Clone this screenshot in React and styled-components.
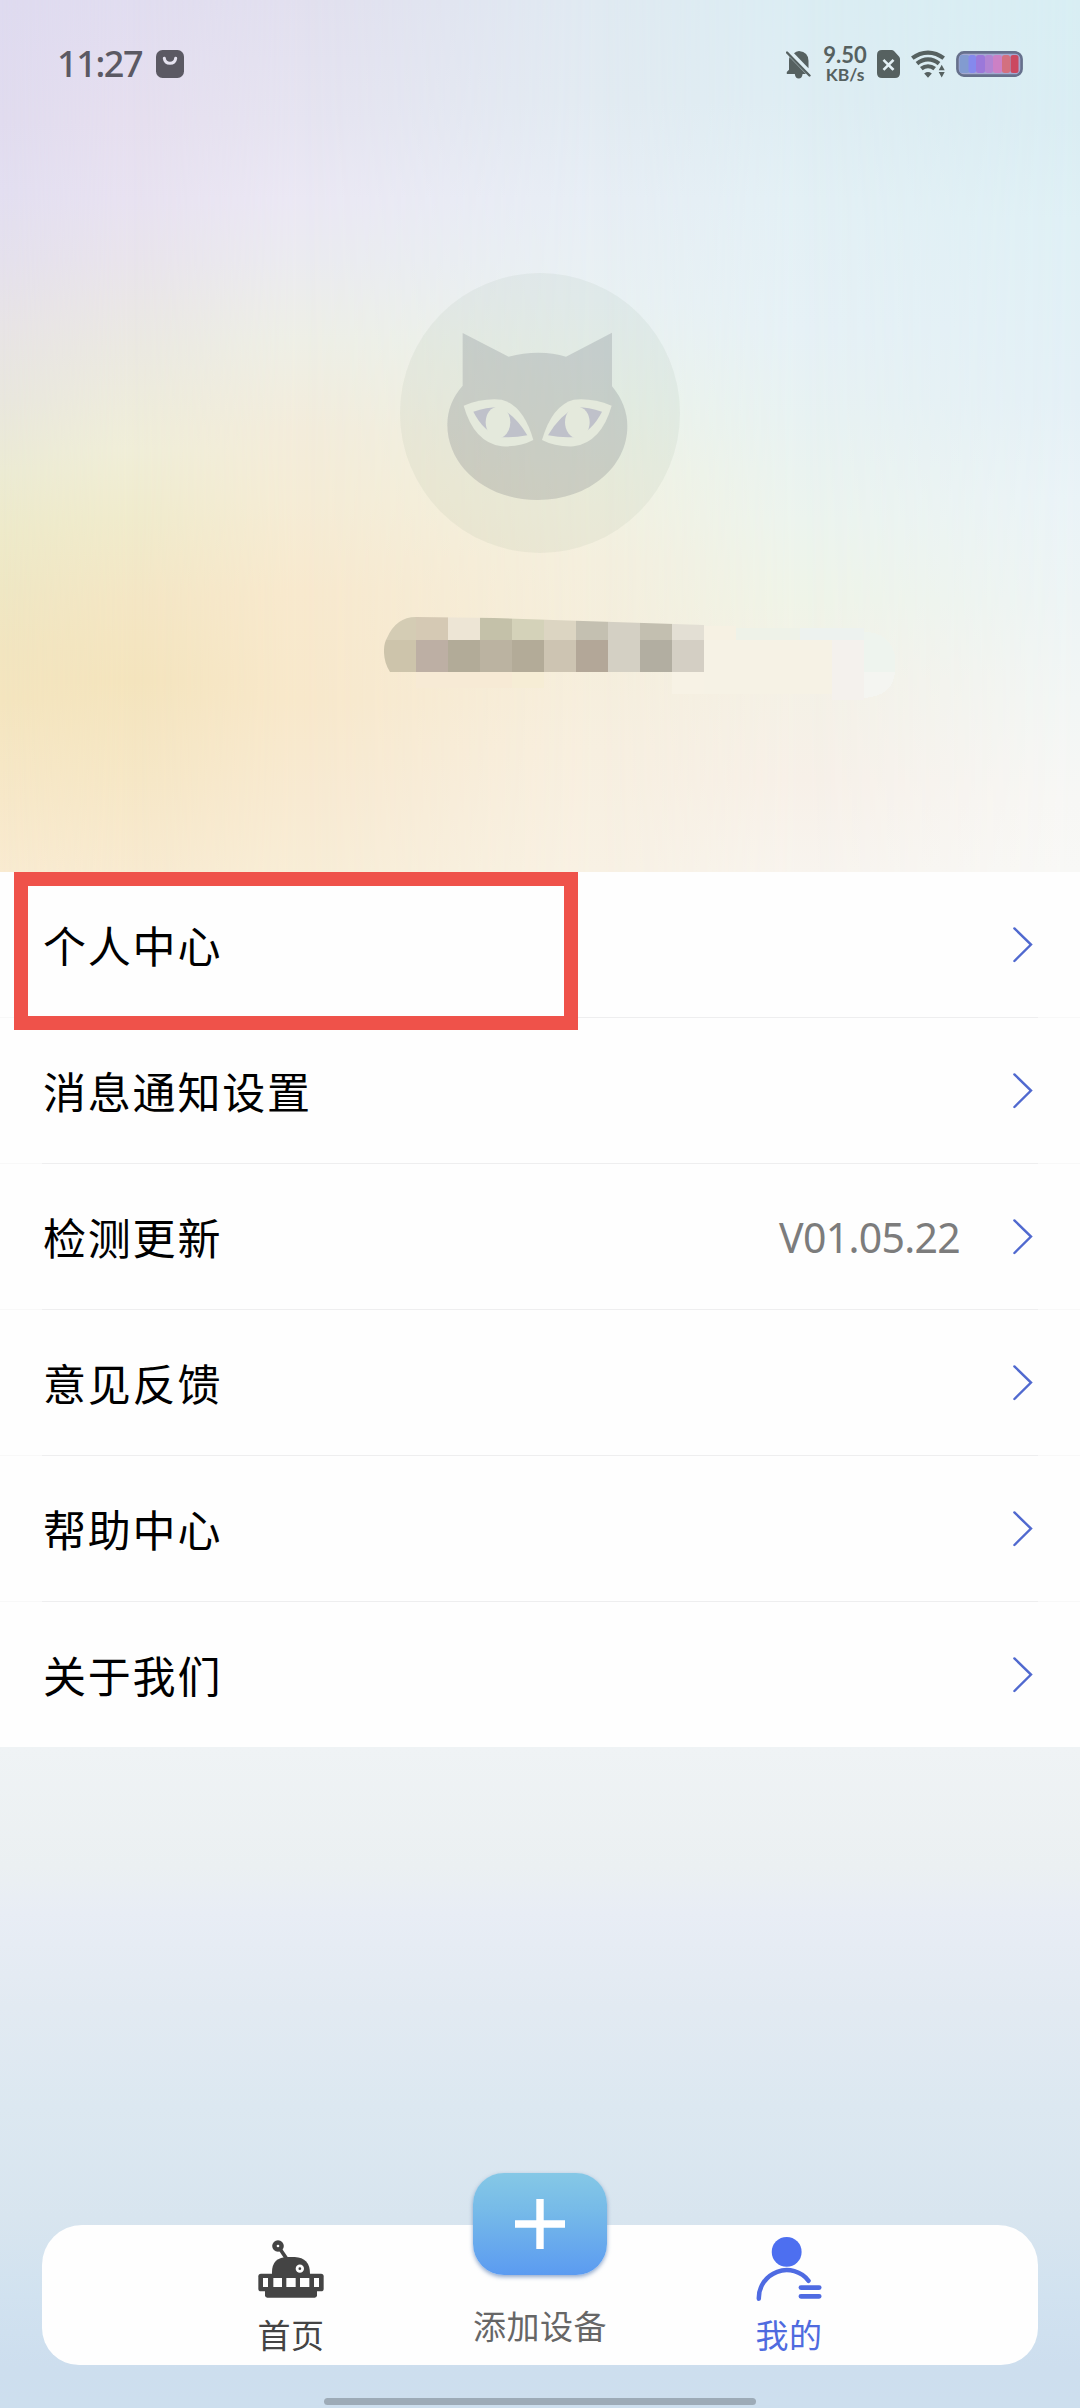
import styled, { createGlobalStyle } from "styled-components";

const GlobalStyle = createGlobalStyle`
  * {
    box-sizing: border-box;
  }

  body {
    margin: 0;
    background: #fff;
    font-family: "Noto Sans", "Noto Sans CJK SC", sans-serif;
  }
`;

const Page = styled.div`
  display: flex;
  flex-direction: column;
  width: 1080px;
  height: 2408px;
  overflow: hidden;
`;

/* header */

const Header = styled.header`
  display: grid;
  flex: none;
  height: 872px;
`;

// one vertical gradient per column, faded into the column on its left
const Wash = styled.div`
  grid-area: 1 / 1;
  background: linear-gradient(to bottom, ${({ $stops }) => $stops});
  mask-image: linear-gradient(to right, transparent ${({ $from }) => $from}px, #000 ${({ $to }) => $to}px);
`;

const HeaderContent = styled.div`
  grid-area: 1 / 1;
  z-index: 1;
  display: flex;
  flex-direction: column;
  align-items: center;
`;

const StatusBar = styled.div`
  display: flex;
  align-items: center;
  width: 100%;
  height: 128px;
  padding: 0 57px;
  color: #566160;
`;

const Clock = styled.span`
  width: 99px;
  font-family: "Noto Sans", sans-serif;
  font-size: 36px;
  font-weight: 500;
  line-height: 40px;
  letter-spacing: -1.4px;
  color: #5b5963;
`;

const StatusIcon = styled.svg`
  display: block;
  flex: none;
  margin-left: ${({ $gap }) => $gap || 0}px;
`;

const NetSpeed = styled.div`
  display: flex;
  flex-direction: column;
  align-items: center;
  width: 46px;
  margin-left: 10px;
  font-family: Lato, sans-serif;
  font-weight: 700;
  white-space: nowrap;
`;

const SpeedValue = styled.span`
  font-size: 22px;
  line-height: 21px;
`;

const SpeedUnit = styled.span`
  font-size: 17.5px;
  line-height: 19px;
`;

const Spacer = styled.div`
  flex: 1;
`;

const Avatar = styled.svg`
  display: block;
  width: 280px;
  height: 280px;
  margin-top: 145px;
`;

const MaskedName = styled.svg`
  display: block;
  width: 512px;
  height: 96px;
  margin: 55px 0 0 200px;
`;

/* menu */

const Menu = styled.main`
  position: relative;
  flex: none;
  height: 875px;
  background: #fefefe;
`;

const MenuRow = styled.div`
  display: flex;
  align-items: center;
  height: 146px;
  padding: 0 47px 0 43px;
  background: linear-gradient(to right, #f8f8f8 42px, #eeeeef 42px, #eeeeef 1038px, #f8f8f8 1038px) bottom / 100% 1px
    no-repeat;

  &:last-child {
    background: none;
  }
`;

const MenuLabel = styled.span`
  flex: 1;
  padding-bottom: 2px;
  font-family: "Noto Sans CJK SC", sans-serif;
  font-size: 43px;
  line-height: 60px;
  letter-spacing: 1.8px;
  color: #000;
`;

const MenuValue = styled.span`
  margin-right: 53px;
  padding-bottom: 1px;
  font-family: "Noto Sans", sans-serif;
  font-size: 41px;
  line-height: 60px;
  letter-spacing: -0.7px;
  color: #7c7c7c;
`;

const Highlight = styled.div`
  position: absolute;
  top: 0;
  left: 14px;
  width: 564px;
  height: 158px;
  border: 14px solid #ef524a;
`;

/* bottom */

const Bottom = styled.footer`
  display: flex;
  flex: 1;
  flex-direction: column;
  align-items: center;
  justify-content: flex-end;
  padding-bottom: 3px;
  background: linear-gradient(
    to bottom,
    #eff3f5 0,
    #ebf0f2 120px,
    #e8edf5 165px,
    #e2eaf2 260px,
    #dce8f1 360px,
    #d8e5ef 470px,
    #d1e2f0 550px,
    #cddeee 620px,
    #cddfee 100%
  );
`;

const TabBar = styled.nav`
  display: flex;
  justify-content: center;
  width: 996px;
  height: 140px;
  border-radius: 40px 40px 37px 37px;
  background: #fefefe;
`;

const Tab = styled.div`
  display: flex;
  flex-direction: column;
  align-items: center;
  width: 249px;
  padding-top: ${({ $top }) => $top}px;
  font-family: "Noto Sans CJK SC", sans-serif;
  color: ${({ $color }) => $color};
`;

const TabIcon = styled.svg`
  display: block;
  flex: none;
`;

const TabLabel = styled.span`
  margin-top: ${({ $gap }) => $gap}px;
  font-size: 33px;
  line-height: 40px;
  letter-spacing: 0.5px;
`;

const AddButton = styled.div`
  display: flex;
  align-items: center;
  justify-content: center;
  flex: none;
  width: 134px;
  height: 102px;
  margin-top: -52px;
  border-radius: 31px;
  background: linear-gradient(to bottom, #85c8e6, #77bbe8 35%, #5b9bf1);
  box-shadow: 0 2px 4px rgba(70, 110, 170, 0.6);
`;

const HomeIndicator = styled.div`
  width: 432px;
  height: 7px;
  margin-top: 33px;
  border-radius: 4px;
  background: #9dabb7;
`;

const washes = [
  {
    from: -2,
    to: -1,
    stops:
      "#dfdbf0 0, #e1dcef 120px, #e3dff1 190px, #e5e1ed 260px, #e8e4e6 325px, #e9e7de 400px, #ecebd4 470px, #eeeaca 530px, #efe7c4 590px, #f2e5c0 650px, #f4e5bf 700px, #f7e8c9 800px, #f9ebd1 872px",
  },
  {
    from: 0,
    to: 130,
    stops:
      "#e1ddf0 0, #e6dfef 120px, #e8e2f1 200px, #e9e4ec 260px, #ebe9e1 350px, #f0eed8 450px, #f0ebcc 520px, #f4e6c4 600px, #f4e4bd 680px, #f6e7c6 780px, #f8ead0 872px",
  },
  {
    from: 130,
    to: 300,
    stops:
      "#e2e0ef 0, #e6e4f1 120px, #ebe8f4 200px, #ebebf0 260px, #eeefe6 340px, #f3ecdb 430px, #f5ecd6 500px, #f8e9ce 590px, #f8e8cb 700px, #f8ead2 800px, #f8edd6 872px",
  },
  {
    from: 300,
    to: 600,
    stops:
      "#e0eaf2 0, #e2ebf2 100px, #e7eef5 200px, #e9f1f3 300px, #ecf3ea 400px, #f1f2e2 480px, #f4efde 560px, #f5eedc 650px, #f7efe0 750px, #f8f1e4 872px",
  },
  {
    from: 600,
    to: 800,
    stops:
      "#dbedf3 0, #deedf3 100px, #e3f0f5 200px, #e6f1f6 330px, #e8f2f2 420px, #ecf4ee 520px, #eff4e8 600px, #f4f1e6 680px, #f7f0e8 780px, #f8f4ee 872px",
  },
  {
    from: 800,
    to: 1080,
    stops:
      "#d8eef3 0, #daedf3 120px, #dff0f5 220px, #e4f0f6 400px, #eaf3f7 500px, #edf4f5 600px, #f2f6f5 700px, #f7f7f5 800px, #f8f8f6 872px",
  },
];

const menuItems = [
  { label: "个人中心" },
  { label: "消息通知设置" },
  { label: "检测更新", value: "V01.05.22" },
  { label: "意见反馈" },
  { label: "帮助中心" },
  { label: "关于我们" },
];

const topTiles = ["#d4ccb4", "#d5c9b4", "#ede5d5", "#c4c1a9", "#d4d2b9", "#dcd5c2", "#c4c0b1", "#d4d0c4", "#c3bfb0", "#e3dfd4"];
const bottomTiles = ["#cdc4ab", "#bdafa4", "#b2ab98", "#bbb3a1", "#b3ab98", "#cdc4b2", "#b3a798", "#d4d0c4", "#b2aea1", "#d4cfc4"];
// [x, y, width, height, color]
const faintTiles = [
  [32, 64, 96, 16, "#f7ead5"],
  [128, 64, 32, 16, "#f6edd5"],
  [288, 64, 64, 22, "#f7f2e5"],
  [320, 18, 32, 14, "#f6f1e3"],
  [320, 32, 128, 54, "#f6f2e5"],
  [352, 20, 64, 12, "#eef2e8"],
  [416, 20, 64, 12, "#edf2ef"],
  [448, 32, 32, 60, "#f4f1ed"],
];

const AvatarIcon = () => (
  <Avatar viewBox="30 40 840 840">
    <circle cx="450" cy="460" r="420" fill="#788c78" fillOpacity="0.08" />
    <path
      d="M218 220L356 291Q400 279 445 279Q490 279 528 291L666 219V380Q712 435 712 500C712 620 600 721 443 721C290 721 172 620 172 495Q172 430 218 378Z"
      fill="#465060"
      fillOpacity="0.18"
    />
    {[undefined, "translate(886 0) scale(-1 1)"].map((transform, i) => (
      <g key={i} transform={transform}>
        <path d="M221 438Q280 414 335 420Q400 437 430 541Q390 562 335 560Q252 548 221 438Z" fill="#e4e9dc" />
        <path d="M250 456Q290 443 326 443Q375 465 412 527Q370 535 330 532Q280 515 250 456Z" fill="#bfc1ca" />
        <ellipse cx="324" cy="488" rx="37" ry="47" fill="#e4e9dc" />
      </g>
    ))}
  </Avatar>
);

const NameMosaic = () => (
  <MaskedName viewBox="0 0 512 96" shapeRendering="crispEdges">
    <clipPath id="nameClip">
      <path d="M6 64C-2 52 -1 36 3 30Q12 9 32 9L110 10L320 17V64Z" />
    </clipPath>
    {faintTiles.map(([x, y, width, height, fill]) => (
      <rect key={`${x}-${y}`} x={x} y={y} width={width} height={height} fill={fill} />
    ))}
    <path d="M480 32V24Q506 24 511 48V64H480Z" fill="#eef4ee" />
    <path d="M480 64H511Q509 88 480 90Z" fill="#f4f5f1" />
    <g clipPath="url(#nameClip)">
      {topTiles.map((fill, i) => (
        <rect key={i} x={i * 32} y="0" width="32" height="32" fill={fill} />
      ))}
      {bottomTiles.map((fill, i) => (
        <rect key={i} x={i * 32} y="32" width="32" height="32" fill={fill} />
      ))}
    </g>
  </MaskedName>
);

const BagIcon = () => (
  <StatusIcon width="28" height="28" viewBox="0 0 28 28">
    <rect width="28" height="28" rx="6.5" fill="#5b5963" />
    <path d="M8.3 8.2Q9 13.3 14 13.3Q19 13.3 19.7 8.2" fill="none" stroke="#e6e3f0" strokeWidth="3" strokeLinecap="round" />
  </StatusIcon>
);

const MutedIcon = () => (
  <StatusIcon width="26" height="29" viewBox="0 0 26 29" fill="currentColor">
    <path d="M8 3.2Q10 1.3 13 1Q22.5 2 22.5 11V18.3Z" />
    <path d="M2.7 6.2L20 24H16.6Q16 28.5 12.7 28.5Q9.4 28.5 8.8 24H0.8V22L3 19.8V10.5Q3 8 3.6 6.8Z" />
    <path d="M1 2.5L23.5 25.5" stroke="currentColor" strokeWidth="2.4" strokeLinecap="round" />
    <path d="M4.4 2.6L26 24.4" stroke="#dfeef3" strokeWidth="1.5" />
  </StatusIcon>
);

const SimIcon = () => (
  <StatusIcon $gap={9} width="23" height="28" viewBox="0 0 23 28">
    <path d="M5 0H14.5Q16 0 17 1L22 6.5Q23 7.5 23 9V23Q23 28 18 28H5Q0 28 0 23V5Q0 0 5 0Z" fill="currentColor" />
    <path d="M7.4 10.8L15.6 19M15.6 10.8L7.4 19" stroke="#e3f0f4" strokeWidth="2.6" strokeLinecap="square" />
  </StatusIcon>
);

const WifiIcon = () => (
  <StatusIcon $gap={11} width="35" height="28" viewBox="0 0 35 28">
    <g fill="none" stroke="currentColor" strokeWidth="4.1">
      <path d="M1.3 8.2Q8.5 2.6 17 2.6Q25.5 2.6 32.7 8.2" />
      <path d="M6 13.6Q11 9.4 17 9.4Q23 9.4 28 13.6" />
      <path d="M10.3 18.7Q13.4 16.2 17 16.2Q20.6 16.2 23.7 18.7" />
    </g>
    <path d="M13.2 23.4Q17 20.8 20.8 23.4L17 27.7Z" fill="currentColor" />
    <path d="M27.7 20.2L30.7 14.7L33.7 20.2ZM27.7 22L30.7 27.5L33.7 22Z" fill="currentColor" />
  </StatusIcon>
);

const batteryCells = [
  ["#829bd0", 3.5, 10],
  ["#8589ed", 12.5, 7.5],
  ["#9b78da", 20, 9],
  ["#b184d3", 29, 8],
  ["#cc80c5", 37, 9],
  ["#d3707f", 46, 8],
  ["#cb4860", 54.5, 8],
];

const BatteryIcon = () => (
  <StatusIcon $gap={10} width="67" height="26" viewBox="0 0 67 26">
    <rect x="1.4" y="1.4" width="64.2" height="23.2" rx="6.5" fill="#a3a8d0" stroke="#66708c" strokeWidth="2.6" />
    {batteryCells.map(([fill, x, width]) => (
      <rect key={x} x={x} y="4" width={width} height="18" rx="2.5" fill={fill} />
    ))}
  </StatusIcon>
);

const ChevronIcon = () => (
  <svg width="20" height="36" viewBox="0 0 20 36" fill="none" stroke="#5069cf" strokeWidth="2.4">
    <path d="M1.4 1.4L18 17.6L1.4 34" strokeLinecap="round" />
  </svg>
);

const RobotIcon = () => (
  <TabIcon width="66" height="58" viewBox="775 240 196 174" fill="currentColor">
    <path d="M838 264L863 301" stroke="currentColor" strokeWidth="11" />
    <circle cx="834" cy="258" r="17.5" />
    <circle cx="834" cy="258" r="4" fill="#fefefe" />
    <path d="M816 347V337Q816 291 864 291H884Q930 293 930 341V347Z" />
    <rect x="775" y="341" width="196" height="53" rx="8" />
    <rect x="795" y="375" width="156" height="38" rx="7" />
    <circle cx="899.5" cy="326" r="12.5" fill="#fefefe" />
    <circle cx="899.5" cy="326" r="4" />
    <path d="M789 354H804V381H789ZM820 354H846V381H820ZM859 354H887V381H859ZM900 354H928V381H900ZM942 354H957V381H942Z" fill="#fefefe" />
  </TabIcon>
);

const PersonIcon = () => (
  <TabIcon width="66" height="64" viewBox="228 140 198 193">
    <circle cx="320" cy="185" r="45" fill="#4d6ff0" />
    <g fill="none" stroke="#4f6be2" strokeWidth="13.5" strokeLinecap="round">
      <path d="M236 326A84 84 0 0 1 386 272" />
      <path d="M363 292.5H418M363 319H418" strokeWidth="14.5" />
    </g>
  </TabIcon>
);

const App = () => {
  return (
    <>
      <GlobalStyle />
      <Page>
        <Header>
          {washes.map((wash) => (
            <Wash key={wash.from} $from={wash.from} $to={wash.to} $stops={wash.stops} />
          ))}
          <HeaderContent>
            <StatusBar>
              <Clock>11:27</Clock>
              <BagIcon />
              <Spacer />
              <MutedIcon />
              <NetSpeed>
                <SpeedValue>9.50</SpeedValue>
                <SpeedUnit>KB/s</SpeedUnit>
              </NetSpeed>
              <SimIcon />
              <WifiIcon />
              <BatteryIcon />
            </StatusBar>
            <AvatarIcon />
            <NameMosaic />
          </HeaderContent>
        </Header>

        <Menu>
          <Highlight />
          {menuItems.map((item) => (
            <MenuRow key={item.label}>
              <MenuLabel>{item.label}</MenuLabel>
              {item.value && <MenuValue>{item.value}</MenuValue>}
              <ChevronIcon />
            </MenuRow>
          ))}
        </Menu>

        <Bottom>
          <TabBar>
            <Tab $top={15} $color="#444">
              <RobotIcon />
              <TabLabel $gap={16}>首页</TabLabel>
            </Tab>
            <Tab $top={0} $color="#666">
              <AddButton>
                <TabIcon width="50" height="50" viewBox="0 0 50 50" stroke="#fff" strokeWidth="7.4">
                  <path d="M25 0V50M0 25H50" />
                </TabIcon>
              </AddButton>
              <TabLabel $gap={30}>添加设备</TabLabel>
            </Tab>
            <Tab $top={12} $color="#4f6bdf">
              <PersonIcon />
              <TabLabel $gap={13}>我的</TabLabel>
            </Tab>
          </TabBar>
          <HomeIndicator />
        </Bottom>
      </Page>
    </>
  );
};

export default App;
